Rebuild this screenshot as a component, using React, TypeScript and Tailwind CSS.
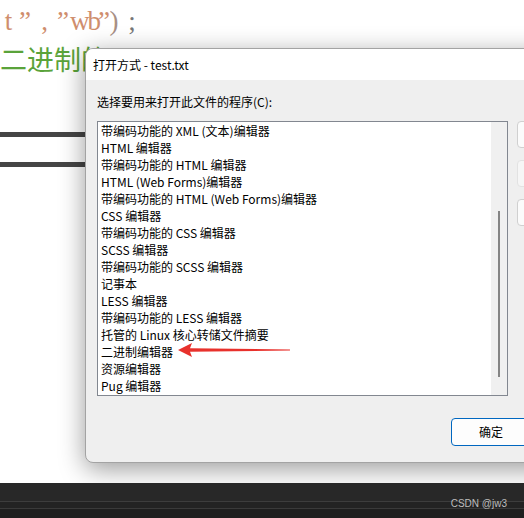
import React from "react";

const programs = [
  "带编码功能的 XML (文本)编辑器",
  "HTML 编辑器",
  "带编码功能的 HTML 编辑器",
  "HTML (Web Forms)编辑器",
  "带编码功能的 HTML (Web Forms)编辑器",
  "CSS 编辑器",
  "带编码功能的 CSS 编辑器",
  "SCSS 编辑器",
  "带编码功能的 SCSS 编辑器",
  "记事本",
  "LESS 编辑器",
  "带编码功能的 LESS 编辑器",
  "托管的 Linux 核心转储文件摘要",
  "二进制编辑器",
  "资源编辑器",
  "Pug 编辑器",
];

const uiFont = { fontFamily: '"Noto Sans CJK SC", "Noto Sans", sans-serif' };

export default function App() {
  return (
    <div className="flex h-[518px] w-[524px] flex-col overflow-hidden bg-white" style={uiFont}>
      {/* editor behind the dialog */}
      <div className="relative h-[483px] shrink-0 overflow-hidden bg-white">
        <div className="flex flex-col" style={{ fontFamily: '"Liberation Serif", "Noto Sans CJK SC", serif' }}>
          <div className="mt-[4px] flex h-[34px] whitespace-nowrap text-[27px] leading-[34px] text-[#cf8e6d]">
            <span className="inline-block w-[17px] text-center">t</span>
            <span className="inline-block w-[16px] text-center">”</span>
            <span className="inline-block w-[23px] text-center">,</span>
            <span className="inline-block w-[14px] text-center">”</span>
            <span className="inline-block w-[28px] text-center tracking-[-2px]">wb</span>
            <span className="inline-block w-[10px] text-center">”</span>
            <span className="inline-block w-[12px] text-center text-[#a88f84]">)</span>
            <span className="inline-block w-[24px] text-center text-[#777]">;</span>
          </div>
          <div className="mt-[6px] h-[34px] text-[27px] leading-[34px] text-[#5aa33a]">二进制的</div>
          <div className="mt-[54px] h-[5px] w-[90px] bg-[#454545]" />
          <div className="mt-[25px] h-[5px] w-[90px] bg-[#454545]" />
        </div>

        {/* dialog window */}
        <div className="absolute left-[85px] top-[48px] flex h-[415px] w-[520px] flex-col overflow-hidden rounded-[8px] border border-[#a3a3a3] bg-[#efefef] shadow-[0_6px_26px_rgba(0,0,0,0.4)]">
          <div className="flex h-[31px] shrink-0 items-center bg-white pl-[7px] text-[12px] text-black">打开方式 - test.txt</div>
          <div className="flex flex-col pl-[11px] pt-[13px]">
            <div className="h-[18px] text-[12px] leading-[18px] text-black">选择要用来打开此文件的程序(C):</div>
            <div className="mt-[10px] flex gap-[9px]">
              <div className="relative flex h-[275px] w-[411px] shrink-0 border border-[#828790] bg-white">
                <div className="flex flex-1 flex-col pl-[3px]">
                  {programs.map((name) => (
                    <div key={name} className="h-[17px] whitespace-nowrap text-[12px] leading-[17px] text-black">
                      {name}
                    </div>
                  ))}
                </div>
                <div className="flex w-[16px] shrink-0 flex-col items-center bg-[#f0f0f0] pt-[89px]">
                  <div className="h-[166px] w-[2px] bg-[#858585]" />
                </div>
              </div>
              <div className="flex shrink-0 flex-col gap-[12px]">
                <div className="h-[27px] w-[80px] rounded-[4px] border border-[#d0d0d0] bg-[#fbfbfb]" />
                <div className="h-[27px] w-[80px] rounded-[4px] border border-[#e2e2e2] bg-[#f6f6f6]" />
                <div className="h-[27px] w-[80px] rounded-[4px] border border-[#d0d0d0] bg-[#fbfbfb]" />
              </div>
            </div>
            <div className="ml-[354px] mt-[22px] flex h-[28px] w-[80px] shrink-0 items-center justify-center rounded-[4px] border border-[#0067c0] bg-[#fdfdfd] text-[12px] text-black">
              确定
            </div>
          </div>
        </div>

        {/* red annotation arrow */}
        <svg className="absolute left-[176px] top-[341px]" width="118" height="18" viewBox="0 0 118 18">
          <path d="M2 9 L16 2 L14 7.2 L114 8.6 L114 9.4 L14 10.8 L16 16 Z" fill="#e8312c" />
        </svg>
      </div>

      {/* dark strip at the bottom */}
      <div className="relative flex h-[35px] flex-col bg-[#282828]">
        <div className="h-[18px]" />
        <div className="h-px bg-[#3d3d3d]" />
        <div className="h-[6px] bg-[#232323]" />
        <div className="h-px bg-[#3a3a3a]" />
        <div className="flex-1 bg-[#1f1f1f]" />
        <div className="absolute right-[17px] top-[13px] text-[10px] text-[#bdbdbd]" style={{ fontFamily: '"Liberation Sans", sans-serif' }}>
          CSDN @jw3
        </div>
      </div>
    </div>
  );
}
